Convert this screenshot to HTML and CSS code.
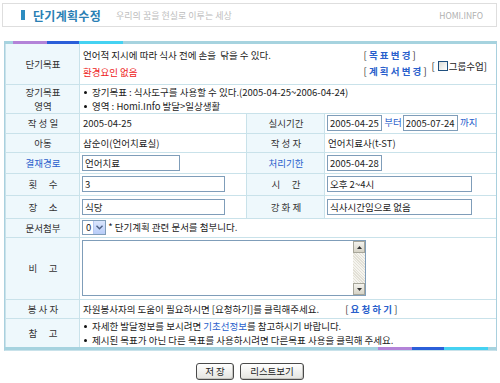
FILE: index.html
```html
<!DOCTYPE html>
<html>
<head>
	<title>단기계획수정</title>
	<meta charset="utf-8">
	<link rel="stylesheet" href="styles.css">
</head>
<body>
	<div class="page-head">
		<span class="mark"></span>
		<h1 class="head-title">단기계획수정</h1>
		<span class="head-sub">우리의 꿈을 현실로 이루는 세상</span>
		<span class="head-site">HOMI.INFO</span>
	</div>

	<div class="board">
		<div class="bar">
			<span class="c-teal w9"></span><span class="c-purple"></span><span class="c-blue"></span><span class="c-cyan"></span><span class="c-teal grow"></span>
		</div>
		<table class="plan">
			<colgroup>
				<col class="col-label"><col class="col-val"><col class="col-label2"><col class="col-val2">
			</colgroup>
			<tr class="row-goal">
				<th>단기목표</th>
				<td colspan="3">
					<div class="goal">
						<div class="goal-text">
							<div>언어적 지시에 따라 식사 전에 손을 &nbsp;닦을 수 있다.</div>
							<div class="red">환경요인 없음</div>
						</div>
						<div class="goal-links">
							<div>[ <a class="link">목 표 변 경</a> ]</div>
							<div>[ <a class="link">계 획 서 변 경</a> ]</div>
						</div>
						<div class="group">[ <span class="chk"></span>그룹수업]</div>
					</div>
				</td>
			</tr>
			<tr class="row-long">
				<th>장기목표<br>영역</th>
				<td colspan="3">
					<ul class="dots">
						<li>장기목표 : 식사도구를 사용할 수 있다.(2005-04-25~2006-04-24)</li>
						<li>영역 : Homi.Info 발달&gt;일상생활</li>
					</ul>
				</td>
			</tr>
			<tr class="row-20">
				<th>작 성 일</th>
				<td>2005-04-25</td>
				<th>실시기간</th>
				<td>
					<input class="inp w54" value="2005-04-25"> <span class="blue">부터</span> <input class="inp w54" value="2005-07-24"> <span class="blue">까지</span>
				</td>
			</tr>
			<tr class="row-19">
				<th>아동</th>
				<td>삼순이(언어치료실)</td>
				<th>작 성 자</th>
				<td>언어치료사(t-ST)</td>
			</tr>
			<tr class="row-21">
				<th class="blue">결재경로</th>
				<td><input class="inp w98" value="언어치료"></td>
				<th class="blue">처리기한</th>
				<td><input class="inp w54" value="2005-04-28"></td>
			</tr>
			<tr class="row-22">
				<th>횟　 수</th>
				<td><input class="inp w143" value="3"></td>
				<th>시　 간</th>
				<td><input class="inp w144" value="오후 2~4시"></td>
			</tr>
			<tr class="row-23">
				<th>장　 소</th>
				<td><input class="inp w143" value="식당"></td>
				<th>강 화 제</th>
				<td><input class="inp w144" value="식사시간임으로 없음"></td>
			</tr>
			<tr class="row-19">
				<th>문서첨부</th>
				<td colspan="3">
					<span class="sel"><span class="sel-val">0</span><span class="sel-btn"><svg width="7" height="5" viewBox="0 0 7 5"><path d="M0.5 0.8 L3.5 3.8 L6.5 0.8" fill="none" stroke="#4d6185" stroke-width="1.4"/></svg></span></span>
					* 단기계획 관련 문서를 첨부니다.
				</td>
			</tr>
			<tr class="row-memo">
				<th>비　 고</th>
				<td colspan="3">
					<div class="memo">
						<textarea class="memo-text"></textarea>
						<div class="scroll">
							<span class="scroll-btn"><svg width="5" height="3" viewBox="0 0 5 3"><path d="M0 3 L2.5 0 L5 3 Z" fill="#333"/></svg></span>
							<span class="scroll-track"></span>
							<span class="scroll-btn"><svg width="5" height="3" viewBox="0 0 5 3"><path d="M0 0 L2.5 3 L5 0 Z" fill="#333"/></svg></span>
						</div>
					</div>
				</td>
			</tr>
			<tr class="row-19">
				<th>봉 사 자</th>
				<td colspan="3">
					자원봉사자의 도움이 필요하시면 [요청하기]를 클릭해주세요.
					<span class="req">[ <a class="link">요 청 하 기</a> ]</span>
				</td>
			</tr>
			<tr class="row-note">
				<th>참　 고</th>
				<td colspan="3">
					<ul class="dots">
						<li>자세한 발달정보를 보시려면 <span class="blue">기초선정보</span>를 참고하시기 바랍니다.</li>
						<li>제시된 목표가 아닌 다른 목표를 사용하시려면 다른목표 사용을 클릭해 주세요.</li>
					</ul>
				</td>
			</tr>
		</table>
		<div class="bar">
			<span class="c-teal grow"></span><span class="c-purple"></span><span class="c-blue"></span><span class="c-cyan"></span><span class="c-teal w9"></span>
		</div>
	</div>

	<div class="btns">
		<button class="btn btn-save">저 장</button>
		<button class="btn btn-list">리스트보기</button>
	</div>
</body>
</html>
```

FILE: styles.css
```css
body {
  margin: 0;
  font-family: "Noto Sans CJK KR", "Liberation Sans", sans-serif;
  font-size: 9.5px;
  color: #222;
  background: #fff;
}

/* top title box */
.page-head {
  display: flex;
  align-items: center;
  height: 24px;
  margin: 3px 3px 0 2px;
  border: 1px solid #dedede;
  box-sizing: border-box;
}
.mark {
  width: 4px;
  height: 10px;
  margin-left: 18px;
  background: #2d8cc0;
}
.head-title {
  margin: 0 0 0 8px;
  font-size: 12px;
  font-weight: bold;
  color: #2a7fb4;
  letter-spacing: 0.3px;
}
.head-sub {
  margin-left: 15px;
  color: #bdbdbd;
  font-size: 9px;
}
.head-site {
  margin-left: auto;
  margin-right: 13px;
  color: #b0b0b0;
  font-size: 8.5px;
}

/* board */
.board {
  width: 493px;
  margin: 14px 0 0 4px;
  border-left: 1px solid #a9d0de;
  border-right: 1px solid #a9d0de;
  border-bottom: 1px solid #c9e2ea;
  box-sizing: border-box;
}
.bar {
  display: flex;
  height: 3px;
}
.bar span { display: block; }
.c-teal { background: #a6d3df; }
.c-purple { width: 34px; background: #b383d8; }
.c-blue { width: 32px; background: #2b5fd9; }
.c-cyan { width: 44px; background: #45d2f2; }
.w9 { width: 8px; }
.grow { flex: 1; }

.plan {
  width: 100%;
  border-collapse: collapse;
  table-layout: fixed;
}
.col-label { width: 74px; }
.col-val { width: 167px; }
.col-label2 { width: 78px; }
.plan th,
.plan td {
  border-bottom: 1px solid #c9e2ea;
  padding: 0 2px 0 3px;
  line-height: 14px;
  font-weight: normal;
  white-space: nowrap;
}
.plan th {
  background: #eef8fc;
  border-right: 1px solid #c9e2ea;
  border-left: 1px solid #c9e2ea;
  text-align: center;
  color: #333;
}
.plan tr:last-child th,
.plan tr:last-child td { border-bottom: none; }

.row-goal { height: 40px; }
.row-long { height: 29px; }
.row-20 { height: 20px; }
.row-19 { height: 19px; }
.row-21 { height: 21px; }
.row-22 { height: 22px; }
.row-23 { height: 23px; }
.row-memo { height: 62px; }
.row-note { height: 28px; }

.red { color: #ee2222; }
.blue { color: #2a5fcc; }
.plan th.blue { color: #2a5fcc; }

/* goal row */
.goal {
  display: flex;
  align-items: flex-start;
}
.goal-text div { height: 17px; line-height: 17px; }
.goal-links {
  margin-left: auto;
  line-height: 16px;
  color: #333;
}
.link {
  color: #2a5fcc;
  font-weight: bold;
  text-decoration: none;
}
.group {
  margin: 12px 7px 0 5px;
  display: flex;
  align-items: center;
}
.chk {
  display: inline-block;
  width: 8px;
  height: 8px;
  margin: 0 1px 0 3px;
  border: 1px solid #1f4f7e;
  background: linear-gradient(135deg, #dcdcd6, #fff);
}

/* bullet lists */
.dots {
  margin: 0;
  padding: 0;
  list-style: none;
}
.dots li {
  padding-left: 9px;
  position: relative;
}
.dots li::before {
  content: "";
  position: absolute;
  left: 1px;
  top: 6px;
  width: 3px;
  height: 3px;
  border-radius: 50%;
  background: #111;
}

/* inputs */
.inp {
  height: 16px;
  box-sizing: border-box;
  border: 1px solid #7f9db9;
  padding: 0 2px;
  margin: 0 0 0 -1px;
  font-family: inherit;
  font-size: 9.5px;
  color: #222;
  vertical-align: middle;
}
.w54 { width: 55px; }
.w98 { width: 98px; }
.w143 { width: 143px; }
.w144 { width: 145px; }

.sel {
  display: inline-flex;
  align-items: stretch;
  height: 15px;
  width: 24px;
  box-sizing: border-box;
  border: 1px solid #7f9db9;
  vertical-align: middle;
  margin-left: -1px;
}
.sel-val {
  flex: 1;
  padding-left: 3px;
  line-height: 13px;
}
.sel-btn {
  width: 11px;
  display: flex;
  align-items: center;
  justify-content: center;
  background: linear-gradient(#dbe6fd, #b8cdf8);
  border-left: 1px solid #b6c8f0;
}

/* memo */
.memo {
  display: flex;
  width: 284px;
  height: 56px;
  margin-left: -1px;
  border: 1px solid #7f9db9;
  box-sizing: border-box;
}
.memo-text {
  flex: 1;
  border: none;
  resize: none;
  padding: 2px;
  margin: 0;
  font-family: inherit;
  font-size: 9.5px;
  outline: none;
}
.scroll {
  width: 12px;
  display: flex;
  flex-direction: column;
  background: #eeede5;
}
.scroll-btn {
  height: 12px;
  box-sizing: border-box;
  border: 1px solid #a7a69a;
  background: linear-gradient(#f4f3ee, #d6d3c6);
  display: flex;
  align-items: center;
  justify-content: center;
}
.scroll-track {
  flex: 1;
  background: repeating-linear-gradient(45deg, #f5f4ef 0 1px, #e2e0d6 1px 2px);
}

.req {
  margin-left: 24px;
  color: #333;
}

/* buttons */
.btns {
  display: flex;
  justify-content: center;
  gap: 6px;
  margin-top: 12px;
}
.btn {
  height: 17px;
  padding: 0;
  border: 1px solid #4a4a4a;
  border-radius: 3px;
  background: linear-gradient(#ffffff, #e4e4e0);
  box-shadow: inset -1px -1px 0 #c4c4c0;
  font-family: inherit;
  font-size: 9.5px;
  color: #222;
  line-height: 14px;
}
.btn-save { width: 38px; }
.btn-list { width: 64px; }
```
